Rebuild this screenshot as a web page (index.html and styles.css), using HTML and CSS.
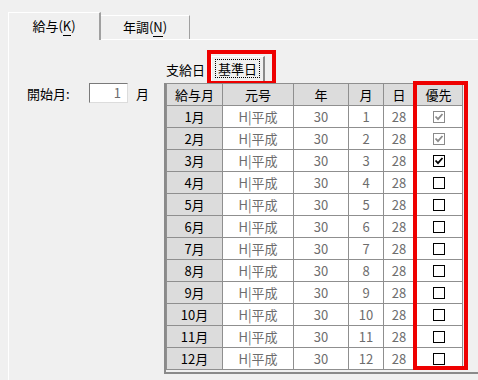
FILE: index.html
```html
<!DOCTYPE html>
<html lang="ja">
<head>
    <meta charset="UTF-8">
    <title>給与設定</title>
    <link rel="stylesheet" href="styles.css">
</head>
<body>
    <!-- Main tabs -->
    <div class="tabs">
        <div class="tab active">給与(<u>K</u>)</div>
        <div class="tab">年調(<u>N</u>)</div>
    </div>

    <div class="panel">
        <!-- Start month -->
        <div class="start">
            <span class="start-label">開始月:</span>
            <span class="start-input">1</span>
            <span>月</span>
        </div>

        <!-- Grid with sub tabs -->
        <div class="grid-area">
            <div class="subtabs">
                <span class="subtab">支給日</span>
                <span class="subtab active"><span class="focus">基準日</span></span>
                <div class="mark mark-tab"></div>
            </div>
            <div class="grid">
                <table>
                    <thead>
                        <tr><th>給与月</th><th>元号</th><th>年</th><th>月</th><th>日</th><th>優先</th></tr>
                    </thead>
                    <tbody id="rows"></tbody>
                </table>
                <div class="mark mark-col"></div>
            </div>
        </div>
    </div>

    <script>
        // Build the 12 month rows
        const rows = document.getElementById('rows');
        const checkOn = '<svg width="12" height="12" viewBox="0 0 12 12"><rect x="0.5" y="0.5" width="11" height="11" fill="#fff" stroke="currentColor"/><path d="M2.5 5.5 L5 8.2 L9.5 3" fill="none" stroke="currentColor" stroke-width="1.8"/></svg>';
        const checkOff = '<svg width="12" height="12" viewBox="0 0 12 12"><rect x="0.5" y="0.5" width="11" height="11" fill="#fff" stroke="currentColor"/></svg>';
        for (let m = 1; m <= 12; m++) {
            let box = checkOff;
            let cls = 'chk';
            if (m <= 2) { box = checkOn; cls = 'chk disabled'; }
            if (m === 3) { box = checkOn; }
            rows.innerHTML += '<tr><td class="month">' + m + '月</td><td>H|平成</td><td>30</td><td>' + m + '</td><td>28</td><td class="' + cls + '">' + box + '</td></tr>';
        }
    </script>
</body>
</html>
```

FILE: styles.css
```css
/* General */
body {
    margin: 0;
    width: 478px;
    height: 380px;
    overflow: hidden;
    background: #f0f0f0;
    font-family: "Noto Sans CJK JP", "DejaVu Sans", sans-serif;
    font-size: 13px;
    color: #000;
}

/* Main tabs */
.tabs {
    display: flex;
    align-items: flex-end;
    padding: 12px 0 0 8px;
    height: 27px;
}

.tab {
    box-sizing: border-box;
    width: 89px;
    height: 24px;
    line-height: 22px;
    text-align: center;
    border-top: 1px solid #fff;
    border-right: 1px solid #a0a0a0;
}

.tab.active {
    width: 93px;
    height: 28px;
    line-height: 26px;
    border-left: 1px solid #fff;
    border-right: 2px solid #a0a0a0;
    margin-bottom: -1px;
    background: #f0f0f0;
    position: relative;
    z-index: 1;
}

.tab u {
    text-decoration: none;
    border-bottom: 1px solid #000;
}

/* Tab panel */
.panel {
    display: flex;
    align-items: flex-start;
    margin-left: 8px;
    height: 341px;
    border-top: 1px solid #fff;
    border-left: 1px solid #fff;
    padding-top: 16px;
}

/* Start month */
.start {
    display: flex;
    align-items: center;
    margin-top: 27px;
    padding-left: 18px;
    width: 137px;
    height: 20px;
}

.start-label {
    width: 62px;
}

.start-input {
    box-sizing: border-box;
    width: 39px;
    height: 20px;
    line-height: 18px;
    margin-right: 8px;
    padding-right: 6px;
    text-align: right;
    background: #fff;
    border: 1px solid #7a7a7a;
    border-right-color: #dcdcdc;
    border-bottom-color: #dcdcdc;
    color: #6d6d6d;
}

/* Grid area */
.grid-area {
    flex: 1;
}

.subtabs {
    display: flex;
    align-items: flex-end;
    height: 27px;
    position: relative;
}

.subtab {
    padding: 0 6px 5px 2px;
    line-height: 16px;
}

.subtab.active {
    box-sizing: border-box;
    height: 25px;
    width: 54px;
    padding: 2px 3px 0 3px;
    margin-bottom: 2px;
    border-top: 1px solid #fff;
    border-left: 1px solid #fff;
    border-right: 2px solid #8a8a8a;
}

.focus {
    display: block;
    border: 1px dotted #000;
    padding: 0;
    line-height: 17px;
    text-align: center;
}

.grid {
    position: relative;
    border-left: 2px solid #8a8a8a;
    border-bottom: 2px solid #8a8a8a;
    padding-bottom: 2px;
}

table {
    border-collapse: collapse;
    table-layout: fixed;
    width: 297px;
}

th, td {
    height: 21px;
    padding: 0;
    border: 1px solid #8f8f8f;
    text-align: center;
    font-weight: normal;
    color: #6d6d6d;
}

th {
    background: #dcdcdc;
    color: #000;
}

th:nth-child(1) { width: 55px; }
th:nth-child(2) { width: 70px; }
th:nth-child(3) { width: 54px; }
th:nth-child(4) { width: 34px; }
th:nth-child(5) { width: 30px; }

td {
    background: #fff;
}

td.month {
    background: #dcdcdc;
    color: #000;
}

td.chk {
    color: #000;
    line-height: 0;
}

td.chk svg {
    vertical-align: middle;
}

td.chk.disabled {
    color: #8a8a8a;
}

/* Red highlight boxes */
.mark {
    position: absolute;
    box-sizing: border-box;
    border: 4px solid #ee0000;
    pointer-events: none;
}

.mark-tab {
    left: 43px;
    top: -6px;
    width: 69px;
    height: 35px;
}

.mark-col {
    left: 247px;
    top: -2px;
    width: 55px;
    height: 289px;
}
```
